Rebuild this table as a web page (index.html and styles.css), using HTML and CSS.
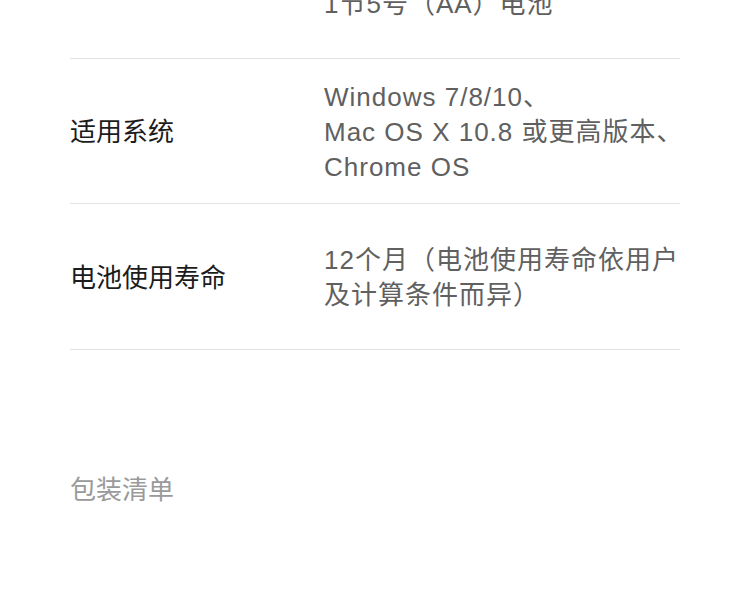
FILE: index.html
```html
<!DOCTYPE html>
<html lang="zh-CN">
<head>
    <meta charset="UTF-8">
    <meta name="viewport" content="width=device-width, initial-scale=1.0">
    <title>规格参数</title>
    <link rel="stylesheet" href="styles.css">
</head>
<body>

<div class="specs">
    <div class="spec-row">
        <div class="spec-label">电池</div>
        <div class="spec-value">鼠标：<br>1节5号（AA）电池</div>
    </div>
    <div class="spec-row">
        <div class="spec-label">适用系统</div>
        <div class="spec-value lines">Windows 7/8/10、<br>Mac OS X 10.8 或更高版本、<br>Chrome OS</div>
    </div>
    <div class="spec-row">
        <div class="spec-label">电池使用寿命</div>
        <div class="spec-value">12个月（电池使用寿命依用户及计算条件而异）</div>
    </div>
</div>

<h2 class="section-title">包装清单</h2>

</body>
</html>
```

FILE: styles.css
```css
body {
  margin: 0;
  background: #fff;
  font-family: "Liberation Sans", "Noto Sans CJK SC", sans-serif;
  font-size: 26px;
  line-height: 35px;
}

.specs {
  margin: -87px 70px 0;
}

.spec-row {
  display: grid;
  grid-template-columns: 254px 1fr;
  align-items: center;
  box-sizing: border-box;
  height: 145.5px;
  padding-top: 4px;
  border-bottom: 1px solid #e2e2e2;
}

.spec-label {
  color: #1c1c1c;
}

.spec-value {
  color: #606060;
  letter-spacing: 1px;
}

.lines {
  white-space: nowrap;
}

.section-title {
  margin: 123px 70px 0;
  font-size: 26px;
  font-weight: normal;
  line-height: 35px;
  color: #9a9a9a;
}
```
